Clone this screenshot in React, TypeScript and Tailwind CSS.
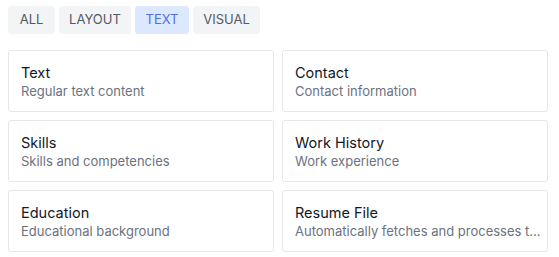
import React, { useState } from 'react';

const filters = [
  { label: 'ALL', w: 'w-[47px]' },
  { label: 'LAYOUT', w: 'w-[72px]' },
  { label: 'TEXT', w: 'w-[54px]' },
  { label: 'VISUAL', w: 'w-[67px]' },
];

const blocks = [
  { title: 'Text', desc: 'Regular text content' },
  { title: 'Contact', desc: 'Contact information' },
  { title: 'Skills', desc: 'Skills and competencies' },
  { title: 'Work History', desc: 'Work experience' },
  { title: 'Education', desc: 'Educational background' },
  { title: 'Resume File', desc: 'Automatically fetches and processes the latest resume file' },
];

// descriptions are clipped by length, not by width
const short = (s: string) => (s.length > 37 ? s.slice(0, 37) + '...' : s);

export default function App() {
  const [active, setActive] = useState('TEXT');

  return (
    <div className="w-[556px] px-2 pt-1.5 bg-white font-['Inter',sans-serif]">
      {/* Filter tabs */}
      <div className="flex gap-1 mb-4">
        {filters.map((f) => (
          <button
            key={f.label}
            onClick={() => setActive(f.label)}
            className={
              active === f.label
                ? `${f.w} h-7 rounded-[3px] text-[13px] bg-[#dbe8fe] text-[#4f6ee8]`
                : `${f.w} h-7 rounded-[3px] text-[13px] bg-[#f3f4f6] text-[#525a66]`
            }
          >
            {f.label}
          </button>
        ))}
      </div>

      {/* Block cards */}
      <div className="grid grid-cols-2 gap-2">
        {blocks.map((b) => (
          <div key={b.title} className="h-[62px] border border-[#e5e7eb] rounded-[3px] px-3 py-3 min-w-0">
            <div className="text-[14.5px] leading-[20px] text-[#111827]">{b.title}</div>
            <div className="text-[13px] leading-[16px] text-[#6b7280] whitespace-nowrap">{short(b.desc)}</div>
          </div>
        ))}
      </div>
    </div>
  );
}
